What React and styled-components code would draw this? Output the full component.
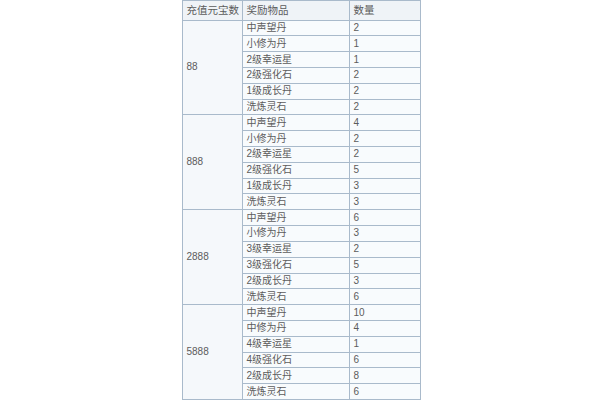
import React from 'react';
import styled, { createGlobalStyle } from 'styled-components';

const GlobalStyle = createGlobalStyle`
    html, body {
        margin: 0;
        background: #fff;
    }
    body {
        font-family: "Liberation Sans", "Noto Sans CJK SC", sans-serif;
    }
`;

const Page = styled.div`
    width: 600px;
    height: 400px;
    display: flex;
    justify-content: center;
    padding-left: 2px;
    box-sizing: border-box;
    overflow: hidden;
`;

const Table = styled.table`
    border-collapse: collapse;
    table-layout: fixed;
    width: 238px;
    font-size: 10px;
    line-height: 12px;
    color: #5c5c5c;
    background: #f8fbfd;
`;

const Col = styled.col`
    width: ${p => p.w}px;
`;

const Th = styled.th`
    border: 1px solid #a9bacb;
    background: #eff3f7;
    font-weight: normal;
    text-align: left;
    padding: 0 0 0 4px;
    font-size: 10.5px;
`;

const Td = styled.td`
    border: 1px solid #a9bacb;
    padding: 0 0 0 4px;
    text-align: left;
    vertical-align: middle;
    white-space: nowrap;
    background: ${p => (p.$group ? '#f5f8fb' : '#f8fbfd')};
`;

const HeadRow = styled.tr`
    height: 19.5px;
`;

const Row = styled.tr`
    height: 15.75px;
`;

const data = [
    {
        amount: '88',
        items: [
            ['中声望丹', 2],
            ['小修为丹', 1],
            ['2级幸运星', 1],
            ['2级强化石', 2],
            ['1级成长丹', 2],
            ['洗炼灵石', 2],
        ],
    },
    {
        amount: '888',
        items: [
            ['中声望丹', 4],
            ['小修为丹', 2],
            ['2级幸运星', 2],
            ['2级强化石', 5],
            ['1级成长丹', 3],
            ['洗炼灵石', 3],
        ],
    },
    {
        amount: '2888',
        items: [
            ['中声望丹', 6],
            ['小修为丹', 3],
            ['3级幸运星', 2],
            ['3级强化石', 5],
            ['2级成长丹', 3],
            ['洗炼灵石', 6],
        ],
    },
    {
        amount: '5888',
        items: [
            ['中声望丹', 10],
            ['中修为丹', 4],
            ['4级幸运星', 1],
            ['4级强化石', 6],
            ['2级成长丹', 8],
            ['洗炼灵石', 6],
        ],
    },
];

const Group = ({ amount, items }) => (
    <>
        {items.map(([name, count], i) => (
            <Row key={name + i}>
                {i === 0 ? <Td $group rowSpan={items.length}>{amount}</Td> : null}
                <Td>{name}</Td>
                <Td>{count}</Td>
            </Row>
        ))}
    </>
);

export default function App() {
    return (
        <Page>
            <GlobalStyle />
            <Table>
                <colgroup>
                    <Col w={60} />
                    <Col w={107} />
                    <Col w={71} />
                </colgroup>
                <thead>
                    <HeadRow>
                        <Th>充值元宝数</Th>
                        <Th>奖励物品</Th>
                        <Th>数量</Th>
                    </HeadRow>
                </thead>
                <tbody>
                    {data.map(g => (
                        <Group key={g.amount} {...g} />
                    ))}
                </tbody>
            </Table>
        </Page>
    );
}
